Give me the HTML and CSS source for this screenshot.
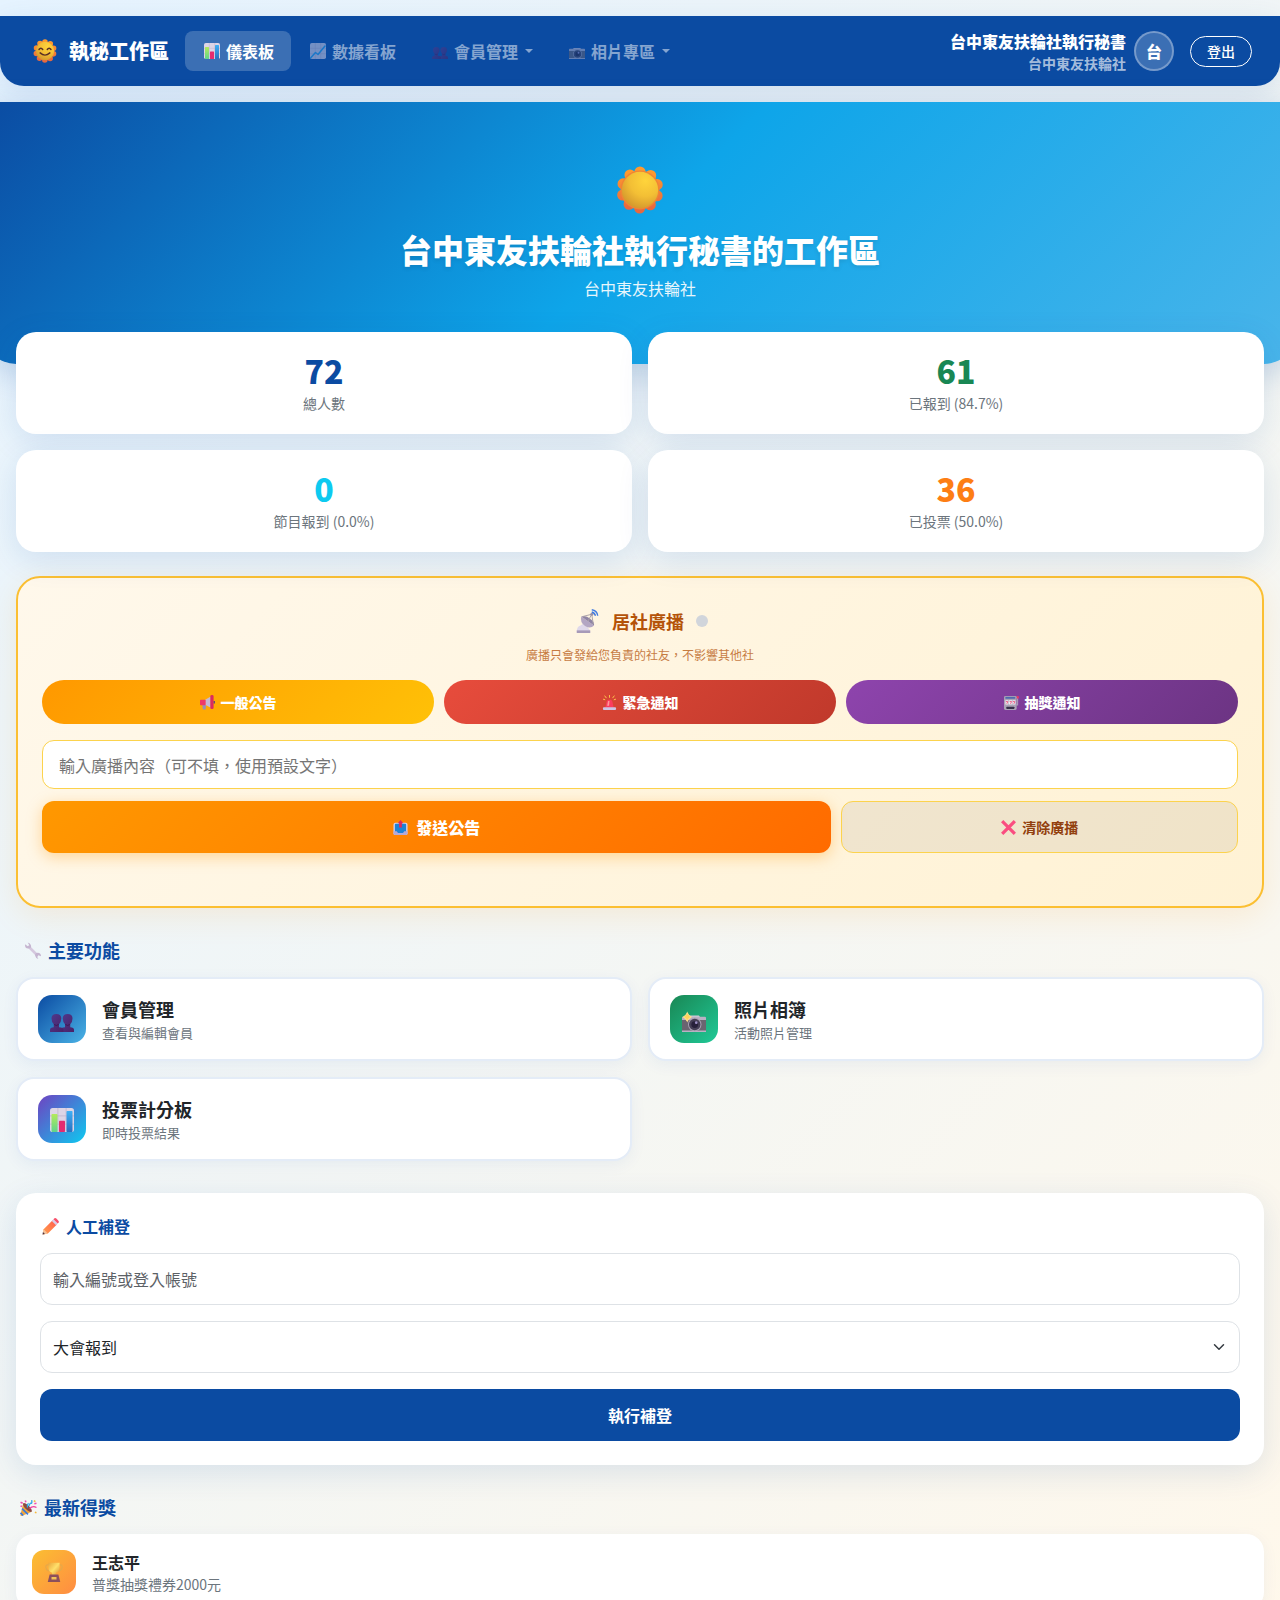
FILE: index.html
```html
<!DOCTYPE html>
<html lang="zh-Hant">

<head>
    <meta charset="UTF-8">
    <meta name="viewport" content="width=device-width, initial-scale=1.0">
    <title>執秘工作區</title>
    <link rel="stylesheet" href="styles.css">
</head>

<body>

    <!-- icon sprite -->
    <svg class="sprite" aria-hidden="true">
        <defs>
            <linearGradient id="g-petal" x1="1" y1="0" x2="0" y2="0">
                <stop offset="0" stop-color="#ff9a2e" />
                <stop offset="1" stop-color="#e8683f" />
            </linearGradient>
            <radialGradient id="g-sun" cx="0.65" cy="0.25" r="0.85">
                <stop offset="0" stop-color="#ffd43b" />
                <stop offset="0.5" stop-color="#f3bf35" />
                <stop offset="1" stop-color="#cf922c" />
            </radialGradient>
            <linearGradient id="g-green" x1="0" y1="0" x2="0" y2="1">
                <stop offset="0" stop-color="#b4ea5a" />
                <stop offset="1" stop-color="#5fd48c" />
            </linearGradient>
            <linearGradient id="g-blue" x1="0" y1="0" x2="0" y2="1">
                <stop offset="0" stop-color="#3fb0f5" />
                <stop offset="1" stop-color="#2a6fc0" />
            </linearGradient>
            <linearGradient id="g-people" x1="0" y1="0" x2="1" y2="1">
                <stop offset="0" stop-color="#4f3a8e" />
                <stop offset="1" stop-color="#4a2065" />
            </linearGradient>
            <linearGradient id="g-pencil" x1="1" y1="0" x2="0" y2="1">
                <stop offset="0" stop-color="#ff5a4f" />
                <stop offset="1" stop-color="#ffa04a" />
            </linearGradient>
            <linearGradient id="g-cup" x1="0" y1="0" x2="1" y2="1">
                <stop offset="0" stop-color="#e9a43c" />
                <stop offset="0.5" stop-color="#ffe06a" />
                <stop offset="1" stop-color="#d98a34" />
            </linearGradient>
        </defs>

        <symbol id="i-sun" viewBox="0 0 32 32">
            <circle cx="16" cy="16" r="12" fill="none" stroke="url(#g-petal)" stroke-width="7.4" stroke-linecap="round" stroke-dasharray="0 7.54" transform="rotate(-90 16 16)" />
            <circle cx="16" cy="16" r="13" fill="#f08534" />
            <circle cx="16" cy="16" r="12.1" fill="url(#g-sun)" />
        </symbol>
        <symbol id="i-sunface" viewBox="0 0 32 32">
            <circle cx="16" cy="16" r="12" fill="none" stroke="url(#g-petal)" stroke-width="7.4" stroke-linecap="round" stroke-dasharray="0 7.54" transform="rotate(-90 16 16)" />
            <circle cx="16" cy="16" r="12.3" fill="url(#g-sun)" />
            <path d="M8 14q2.5-3.5 5 0M19 14q2.5-3.5 5 0M9.500 18.500q6.500 6 13 0" fill="none" stroke="#5a3024" stroke-width="1.9" stroke-linecap="round" />
        </symbol>
        <symbol id="i-bars" viewBox="0 0 32 32">
            <rect width="32" height="32" rx="3.500" fill="#ddd5e6" />
            <path d="M0 10.500h32M0 21.500h32M10.500 0v32M21.500 0v32" stroke="#beb3cc" stroke-width="1" />
            <rect x="2" y="8" width="8" height="24" rx="1" fill="url(#g-green)" />
            <rect x="12" y="17" width="8" height="15" rx="1" fill="#e52b70" />
            <rect x="22" y="4" width="8" height="28" rx="1" fill="url(#g-blue)" />
        </symbol>
        <symbol id="i-line" viewBox="0 0 32 32">
            <rect width="32" height="32" rx="3.500" fill="#ddd5e6" />
            <path d="M0 10.500h32M0 21.500h32M10.500 0v32M21.500 0v32" stroke="#beb3cc" stroke-width="1" />
            <path d="M1 30l10-11 5 4 14-17" fill="none" stroke="#27a4f0" stroke-width="3" stroke-linecap="round" stroke-linejoin="round" />
        </symbol>
        <symbol id="i-people" viewBox="0 0 32 32">
            <path d="M14 33v-4q0-3 6-3.500v-4q-3-3-3-7.500Q17 8 23.500 8T30 14q0 4.500-3 7.500v4q5 .5 5 3.500v4z" fill="url(#g-people)" />
            <path d="M0 33v-4q0-3 5-3.500v-4q-3-3-3-7.500Q2 8 8.500 8T15 14q0 4.500-3 7.500v4q6 .5 6 3.500v4z" fill="url(#g-people)" />
            <path d="M5.500 22q3 2.500 6 0M20.500 22q3 2.500 6 0" fill="none" stroke="#3b1850" stroke-width="1.200" />
        </symbol>
        <symbol id="i-camera" viewBox="0 0 32 32">
            <path d="M8 12l1.500-2h13l1.500 2z" fill="#cfc8d8" />
            <rect y="12" width="32" height="20" rx="1.500" fill="#6a6470" />
            <path d="M0 16v-3q0-1.500 1.500-1.500h29q1.500 0 1.500 1.500v3zM0 30h32v2H0z" fill="#b9b1c4" />
            <circle cx="17" cy="22" r="9" fill="#a9a2b4" />
            <circle cx="17" cy="22" r="7.600" fill="#453f55" />
            <circle cx="17" cy="22" r="4.500" fill="#27203a" />
            <circle cx="19" cy="19.500" r="1.800" fill="#9d90c4" />
        </symbol>
        <symbol id="i-flash" viewBox="0 0 32 32">
            <use href="#i-camera" />
            <path d="M7 6.500q1.500 3.500 5 5.500-3.500 2-5 5.500-1.500-3.500-5-5.500 3.500-2 5-5.500z" fill="#ffd45c" stroke="#ffdf8a" stroke-width="1.500" />
        </symbol>
        <symbol id="i-dish" viewBox="0 0 32 32">
            <path d="M1 31q0-8 5-9l3-2 4 3q6 3 6 8z" fill="#dfd8ea" />
            <path d="M1 28.500h18V32H1z" fill="#a79ab8" />
            <path d="M7 10q-2 8 5 12.500T24 22z" fill="#b3a6c3" />
            <path d="M7 10l17 12q1-4-5-9T7 10z" fill="#8f84a4" />
            <path d="M16 16l5-9M9 10l12-3 2 13" fill="none" stroke="#aaa0a8" stroke-width="1.300" />
            <circle cx="21" cy="7" r="2" fill="#9b91a4" />
            <path d="M21 1q7 1 8 8M21 4q4 1 5 5" fill="none" stroke="#3f7ae0" stroke-width="1.800" />
        </symbol>
        <symbol id="i-horn" viewBox="0 0 32 32">
            <path d="M5 21h8l-1 10H6z" fill="#9b90b4" />
            <path d="M11 10L23 3v24l-12-6z" fill="#c6b9d6" />
            <rect x="0" y="10" width="12" height="12" rx="1.500" fill="#ef3868" />
            <rect x="22" y="0" width="7" height="30" rx="3" fill="#dc2b5e" />
            <path d="M29 13h3v5h-3z" fill="#6b4a6e" />
        </symbol>
        <symbol id="i-siren" viewBox="0 0 32 32">
            <path d="M16 0v5M6 2l3 4M26 2l-3 4M3 9l3 1M29 9l-3 1" stroke="#ffc94d" stroke-width="2" stroke-linecap="round" />
            <path d="M7 27l3-13q1-4 4-4h4q3 0 4 4l3 13z" fill="#fb3c5f" />
            <path d="M13 13h3l-1 10h-4z" fill="#ff9a9a" />
            <rect x="2" y="26" width="28" height="6" rx="2" fill="#cdc3e4" />
        </symbol>
        <symbol id="i-slot" viewBox="0 0 32 32">
            <path d="M29 6v15h-3" fill="none" stroke="#a99eb8" stroke-width="2.400" />
            <circle cx="29" cy="5" r="3" fill="#e63664" />
            <rect x="0" y="2" width="27" height="30" rx="3" fill="#aaa2b5" />
            <rect x="3" y="4" width="21" height="4" fill="#4f6aaf" />
            <path d="M3 11h6.500v9H3zM10.500 11H17v9h-6.500zM18 11h6.500v9H18z" fill="#f1edf6" />
            <path d="M4 14h4l-2 5M12 14h4l-2 5M19 14h4l-2 5" fill="none" stroke="#e63664" stroke-width="1.600" />
            <rect x="5" y="25" width="17" height="5" rx="1" fill="#37304a" />
        </symbol>
        <symbol id="i-outbox" viewBox="0 0 32 32">
            <rect x="1" y="6" width="30" height="26" rx="4" fill="#d9d0e8" />
            <rect x="4" y="8" width="24" height="20" rx="2" fill="#1f83d6" />
            <path d="M1 24h7l3 4h10l3-4h7v4q0 4-4 4H5q-4 0-4-4z" fill="#b7a8d4" />
            <path d="M16 0l6 7h-3v9h-6V7h-3z" fill="#dc2b5e" />
        </symbol>
        <symbol id="i-cross" viewBox="0 0 32 32">
            <path d="M5 5l22 22M27 5L5 27" stroke="#fa4d80" stroke-width="7" stroke-linecap="square" />
        </symbol>
        <symbol id="i-wrench" viewBox="0 0 32 32">
            <path d="M8 8l17 17" stroke="#d5c8de" stroke-width="5" />
            <path d="M2 4q-1 8 6 8t5-6q-1-4-6-5l3 5-3 2zM21 26q-1-6 5-6t6 7l-5-2-2 3 2 4q-5-1-6-6z" fill="#c5b5d0" />
        </symbol>
        <symbol id="i-pencil" viewBox="0 0 32 32">
            <path d="M3 21L20 4l8 8-17 17-9 2z" fill="url(#g-pencil)" />
            <path d="M18.500 5.500l3-3 8 8-3 3z" fill="#d8cbe8" />
            <path d="M21.500 2.500l2-2q2-1 4 1l3 3q2 2 1 4l-2 2z" fill="#f8506a" />
            <path d="M3 21l-2 10 10-2z" fill="#f4c29a" />
            <path d="M1.800 26.500L1 31l4.500-1z" fill="#4b3340" />
        </symbol>
        <symbol id="i-party" viewBox="0 0 32 32">
            <path d="M6 8l16 16L3 32q-3 0-2-3z" fill="#f0a63c" />
            <path d="M4 18l11 11M1 26l5 5" stroke="#3779e0" stroke-width="3" />
            <ellipse cx="14" cy="16" rx="4" ry="11" fill="#8a4a44" transform="rotate(-45 14 16)" />
            <path d="M14 16q-1-6 2-8M17 13q2-6 4-5t1-6" fill="none" stroke="#29a8e8" stroke-width="2.400" />
            <path d="M18 18q6-6 13-2" fill="none" stroke="#ee3fa0" stroke-width="2.600" />
            <path d="M1 6l4 2M1 13l3 1M27 9l4-1M10 3l1 3" stroke="#f04fb0" stroke-width="3" />
            <path d="M26 3l3 2M28 25l3 1" stroke="#f3b93e" stroke-width="3" />
        </symbol>
        <symbol id="i-trophy" viewBox="0 0 32 32">
            <path d="M8 4Q2 4 3 9t6 5M24 4q6 0 5 5t-6 5" fill="none" stroke="#e8a848" stroke-width="2" />
            <path d="M7 1h18v7q0 8-6 9v5h-6v-5q-6-1-6-9z" fill="url(#g-cup)" />
            <path d="M9 20h14l3 12H6z" fill="#8c4f5c" />
            <rect x="12" y="24" width="8" height="4" fill="#f1c257" />
        </symbol>
    </svg>

    <nav class="navbar">
        <a class="brand" href="#"><svg class="brand-icon"><use href="#i-sunface" /></svg>執秘工作區</a>
        <ul class="nav-list">
            <li><a class="nav-link active" href="#"><svg><use href="#i-bars" /></svg>儀表板</a></li>
            <li><a class="nav-link" href="#"><svg><use href="#i-line" /></svg>數據看板</a></li>
            <li><a class="nav-link dropdown" href="#"><svg><use href="#i-people" /></svg>會員管理</a></li>
            <li><a class="nav-link dropdown" href="#"><svg><use href="#i-camera" /></svg>相片專區</a></li>
        </ul>
        <div class="user">
            <div class="user-text">
                <div class="user-name">台中東友扶輪社執行秘書</div>
                <div class="user-club">台中東友扶輪社</div>
            </div>
            <div class="avatar">台</div>
            <button type="button" class="logout">登出</button>
        </div>
    </nav>

    <header class="hero">
        <svg class="hero-icon"><use href="#i-sun" /></svg>
        <h1>台中東友扶輪社執行秘書的工作區</h1>
        <p>台中東友扶輪社</p>
    </header>

    <main class="container">

        <div class="stats">
            <div class="stat-card">
                <div class="stat-number blue">72</div>
                <div class="stat-label">總人數</div>
            </div>
            <div class="stat-card">
                <div class="stat-number green">61</div>
                <div class="stat-label">已報到 (84.7%)</div>
            </div>
            <div class="stat-card">
                <div class="stat-number cyan">0</div>
                <div class="stat-label">節目報到 (0.0%)</div>
            </div>
            <div class="stat-card">
                <div class="stat-number orange">36</div>
                <div class="stat-label">已投票 (50.0%)</div>
            </div>
        </div>

        <!-- 居社廣播 -->
        <section class="broadcast">
            <h2 class="broadcast-title"><svg><use href="#i-dish" /></svg>居社廣播<span class="dot"></span></h2>
            <p class="broadcast-hint">廣播只會發給您負責的社友，不影響其他社</p>
            <div class="types">
                <button type="button" class="type general"><svg><use href="#i-horn" /></svg>一般公告</button>
                <button type="button" class="type urgent"><svg><use href="#i-siren" /></svg>緊急通知</button>
                <button type="button" class="type lottery"><svg><use href="#i-slot" /></svg>抽獎通知</button>
            </div>
            <input type="text" class="message" aria-label="廣播內容" placeholder="輸入廣播內容（可不填，使用預設文字）">
            <div class="actions">
                <button type="button" class="send"><svg><use href="#i-outbox" /></svg>發送公告</button>
                <button type="button" class="clear"><svg><use href="#i-cross" /></svg>清除廣播</button>
            </div>
            <div class="status"></div>
        </section>

        <!-- 主要功能 -->
        <h2 class="section-title indent"><svg><use href="#i-wrench" /></svg>主要功能</h2>
        <div class="features">
            <a class="feature" href="#">
                <span class="feature-icon members"><svg><use href="#i-people" /></svg></span>
                <span class="feature-text"><strong>會員管理</strong><small>查看與編輯會員</small></span>
            </a>
            <a class="feature" href="#">
                <span class="feature-icon photos"><svg><use href="#i-flash" /></svg></span>
                <span class="feature-text"><strong>照片相簿</strong><small>活動照片管理</small></span>
            </a>
            <a class="feature" href="#">
                <span class="feature-icon votes"><svg><use href="#i-bars" /></svg></span>
                <span class="feature-text"><strong>投票計分板</strong><small>即時投票結果</small></span>
            </a>
        </div>

        <!-- 人工補登 -->
        <form class="manual">
            <h2 class="manual-title"><svg><use href="#i-pencil" /></svg>人工補登</h2>
            <input type="text" class="field" aria-label="編號或登入帳號" placeholder="輸入編號或登入帳號">
            <div class="select-wrap">
                <select class="field" aria-label="補登項目">
                    <option>大會報到</option>
                    <option>節目報到</option>
                </select>
                <svg class="chevron" viewBox="0 0 16 16"><path d="M2 5l6 6 6-6" fill="none" stroke="#343a40" stroke-width="2" stroke-linecap="round" stroke-linejoin="round" /></svg>
            </div>
            <button type="button" class="submit">執行補登</button>
        </form>

        <!-- 最新得獎 -->
        <h2 class="section-title"><svg><use href="#i-party" /></svg>最新得獎</h2>
        <div class="winner">
            <span class="winner-icon"><svg><use href="#i-trophy" /></svg></span>
            <div>
                <div class="winner-name">王志平</div>
                <div class="winner-prize">普獎抽獎禮券2000元</div>
            </div>
        </div>

    </main>

</body>

</html>
```
FILE: styles.css
```css
* {
    margin: 0;
    padding: 0;
    box-sizing: border-box;
}

body {
    min-height: 100vh;
    padding-top: 16px;
    overflow-x: hidden;
    font-family: "Noto Sans CJK TC", "Noto Sans", sans-serif;
    font-size: 16px;
    line-height: 24px;
    color: #212529;
    background: linear-gradient(135deg, #e6f4ff 0%, #fff8eb 100%);
}

button,
input,
select {
    font-family: inherit;
    font-size: 16px;
}

button {
    border: none;
    cursor: pointer;
}

a {
    color: inherit;
    text-decoration: none;
}

svg {
    flex-shrink: 0;
    overflow: visible;
}

.sprite {
    position: absolute;
    width: 0;
    height: 0;
}

/* navbar */
.navbar {
    display: flex;
    align-items: center;
    height: 70px;
    padding: 0 28px;
    margin-bottom: 16px;
    background: #0b4ba2;
    color: #fff;
    border-radius: 0 0 24px 24px;
    box-shadow: 0 8px 32px rgba(11, 75, 162, 0.12);
}

.brand {
    display: flex;
    align-items: center;
    gap: 12px;
    margin-right: 16px;
    padding-left: 5px;
    font-size: 20px;
    font-weight: 800;
}

.brand-icon {
    width: 24px;
    height: 24px;
}

.nav-list {
    display: flex;
    list-style: none;
}

.nav-link {
    display: flex;
    align-items: center;
    gap: 6px;
    padding: 8px 17px 8px 19px;
    border-radius: 8px;
    font-weight: 600;
    color: rgba(255, 255, 255, 0.5);
}

.nav-link svg {
    width: 16px;
    height: 16px;
    opacity: 0.5;
}

.nav-link.active {
    color: #fff;
    background: rgba(255, 255, 255, 0.2);
}

.nav-link.active svg {
    opacity: 1;
}

.dropdown::after {
    content: "";
    margin-left: 1px;
    border-top: 4px solid;
    border-left: 4px solid transparent;
    border-right: 4px solid transparent;
}

.user {
    display: flex;
    align-items: center;
    margin-left: auto;
}

.user-text {
    padding-top: 2px;
    text-align: right;
    line-height: 22px;
}

.user-name {
    font-weight: 800;
}

.user-club {
    font-size: 14px;
    font-weight: 600;
    color: rgba(255, 255, 255, 0.65);
}

.avatar {
    width: 40px;
    height: 40px;
    margin: 0 16px 0 8px;
    border: 2px solid rgba(255, 255, 255, 0.3);
    border-radius: 50%;
    background: rgba(255, 255, 255, 0.2);
    font-weight: 800;
    line-height: 36px;
    text-align: center;
}

.logout {
    padding: 4px 16px;
    border: 1px solid #fff;
    border-radius: 16px;
    background: none;
    color: #fff;
    font-size: 14px;
    font-weight: 500;
    line-height: 21px;
}

.hero {
    display: flex;
    flex-direction: column;
    align-items: center;
    padding: 64px 32px;
    margin: 0 -16px;
    background: linear-gradient(135deg, #0b4ba2 0%, #0ea5e9 50%, #4ab5ea 100%);
    color: #fff;
    border-radius: 0 0 32px 32px;
    box-shadow: 0 8px 32px rgba(11, 75, 162, 0.2);
}

.hero-icon {
    width: 48px;
    height: 48px;
    margin-bottom: 16px;
}

.hero h1 {
    margin-bottom: 8px;
    font-size: 32px;
    font-weight: 900;
    line-height: 38px;
    text-shadow: 0 2px 4px rgba(0, 0, 0, 0.1);
}

.hero p {
    opacity: 0.9;
}

.container {
    padding: 0 16px 32px;
    margin-top: -32px;
}

/* stats */
.stats {
    display: grid;
    grid-template-columns: 1fr 1fr;
    gap: 16px;
    margin-bottom: 24px;
}

.stat-card {
    padding: 20px;
    border-radius: 20px;
    background: #fff;
    text-align: center;
    box-shadow: 0 8px 32px rgba(11, 75, 162, 0.12);
}

.stat-number {
    margin-bottom: 4px;
    font-size: 32px;
    font-weight: 800;
    line-height: 36px;
}

.stat-label {
    font-size: 14px;
    line-height: 22px;
    color: #6c757d;
}

.blue {
    color: #0b4ba2;
}

.green {
    color: #198754;
}

.cyan {
    color: #0dcaf0;
}

.orange {
    color: #fd7e14;
}

/* broadcast */
.broadcast {
    padding: 24px;
    margin-bottom: 32px;
    border: 2px solid #fbbf32;
    border-radius: 24px;
    background: linear-gradient(135deg, #fff8eb 0%, #fff2d4 100%);
    box-shadow: 0 8px 32px rgba(255, 152, 0, 0.12);
}

.broadcast-title {
    display: flex;
    justify-content: center;
    align-items: center;
    margin-bottom: 6px;
    font-size: 18px;
    line-height: 38px;
    color: #b45309;
}

.broadcast-title svg {
    width: 24px;
    height: 24px;
    margin: 0 12px 0 4px;
}

.dot {
    width: 12px;
    height: 12px;
    margin-left: 12px;
    border-radius: 50%;
    background: #d1d5db;
}

.broadcast-hint {
    margin-bottom: 16px;
    font-size: 12px;
    line-height: 18px;
    text-align: center;
    color: #b45309;
    opacity: 0.75;
}

.types,
.actions {
    display: flex;
    gap: 10px;
}

.type,
.send,
.clear {
    display: flex;
    flex: 1;
    justify-content: center;
    align-items: center;
    gap: 6px;
    font-weight: 700;
}

.type svg,
.send svg,
.clear svg {
    width: 15px;
    height: 15px;
}

.type {
    height: 44px;
    border-radius: 22px;
    color: #fff;
    font-size: 14px;
    font-weight: 800;
}

.general {
    background: linear-gradient(135deg, #ff9800, #ffc107);
}

.urgent {
    background: linear-gradient(135deg, #e74c3c, #c0392b);
}

.lottery {
    background: linear-gradient(135deg, #8e44ad, #6c3483);
}

.message {
    width: 100%;
    height: 49px;
    margin: 16px 0 12px;
    padding: 0 16px;
    border: 1px solid #fcd34d;
    border-radius: 12px;
    background: #fff;
}

.message::placeholder {
    color: #757575;
}

.send,
.clear {
    height: 52px;
    border-radius: 12px;
}

.send {
    flex: 2;
    gap: 8px;
    background: linear-gradient(135deg, #ff9800, #ff6b00);
    color: #fff;
    font-weight: 800;
    box-shadow: 0 4px 15px rgba(255, 152, 0, 0.35);
}

.clear {
    border: 1px solid #fcd34d;
    background: rgba(0, 0, 0, 0.06);
    color: #92400e;
    font-size: 14px;
}

.status {
    min-height: 20px;
    margin-top: 9px;
}

/* features */
.section-title {
    display: flex;
    align-items: center;
    gap: 7px;
    margin-bottom: 16px;
    padding-left: 4px;
    font-size: 18px;
    line-height: 21px;
    color: #0b4ba2;
}

.section-title.indent {
    padding-left: 8px;
}

.section-title svg {
    width: 17px;
    height: 17px;
}

.features {
    display: grid;
    grid-template-columns: 1fr 1fr;
    gap: 16px;
    margin-bottom: 32px;
}

.feature {
    display: flex;
    align-items: center;
    gap: 16px;
    padding: 16px 20px;
    border: 2px solid #e4ecf7;
    border-radius: 18px;
    background: #fff;
    box-shadow: 0 4px 16px rgba(11, 75, 162, 0.06);
}

.feature-icon {
    display: flex;
    justify-content: center;
    align-items: center;
    width: 48px;
    height: 48px;
    padding-top: 2px;
    border-radius: 14px;
}

.feature-icon svg {
    width: 24px;
    height: 24px;
}

.members {
    background: linear-gradient(135deg, #0b4ba2, #4ab3e6);
}

.photos {
    background: linear-gradient(135deg, #198754, #20c997);
}

.votes {
    background: linear-gradient(135deg, #6f42c1, #0dcaf0);
}

.feature-text strong,
.feature-text small {
    display: block;
}

.feature-text strong {
    font-size: 18px;
    line-height: 27px;
}

.feature-text small {
    font-size: 13px;
    line-height: 20px;
    color: #6c757d;
}

/* manual check-in */
.manual {
    display: grid;
    gap: 16px;
    margin-bottom: 32px;
    padding: 24px;
    border-radius: 20px;
    background: #fff;
    box-shadow: 0 8px 32px rgba(11, 75, 162, 0.12);
}

.manual-title {
    display: flex;
    align-items: center;
    gap: 7px;
    padding: 0 2px 2px;
    font-size: 16px;
    line-height: 18px;
    color: #0b4ba2;
}

.manual-title svg {
    width: 17px;
    height: 17px;
}

.field {
    display: block;
    width: 100%;
    height: 52px;
    padding: 0 12px;
    border: 1px solid #dee2e6;
    border-radius: 12px;
    background: #fff;
    color: #212529;
    appearance: none;
}

.field::placeholder {
    color: #5c6166;
}

.select-wrap {
    position: relative;
}

.chevron {
    position: absolute;
    top: 20px;
    right: 13px;
    width: 16px;
    height: 12px;
    pointer-events: none;
}

.submit {
    height: 52px;
    border-radius: 12px;
    background: #0b4ba2;
    color: #fff;
    font-weight: 700;
}

/* winners */
.winner {
    display: flex;
    align-items: center;
    gap: 16px;
    padding: 16px;
    border-radius: 18px;
    background: #fff;
    box-shadow: 0 4px 16px rgba(11, 75, 162, 0.06);
}

.winner-icon {
    display: flex;
    justify-content: center;
    align-items: center;
    width: 44px;
    height: 44px;
    border-radius: 12px;
    background: linear-gradient(135deg, #fbbf32, #ff8c42);
}

.winner-icon svg {
    width: 20px;
    height: 20px;
}

.winner-name {
    font-weight: 700;
}

.winner-prize {
    font-size: 14px;
    line-height: 20px;
    color: #6c757d;
}
```
